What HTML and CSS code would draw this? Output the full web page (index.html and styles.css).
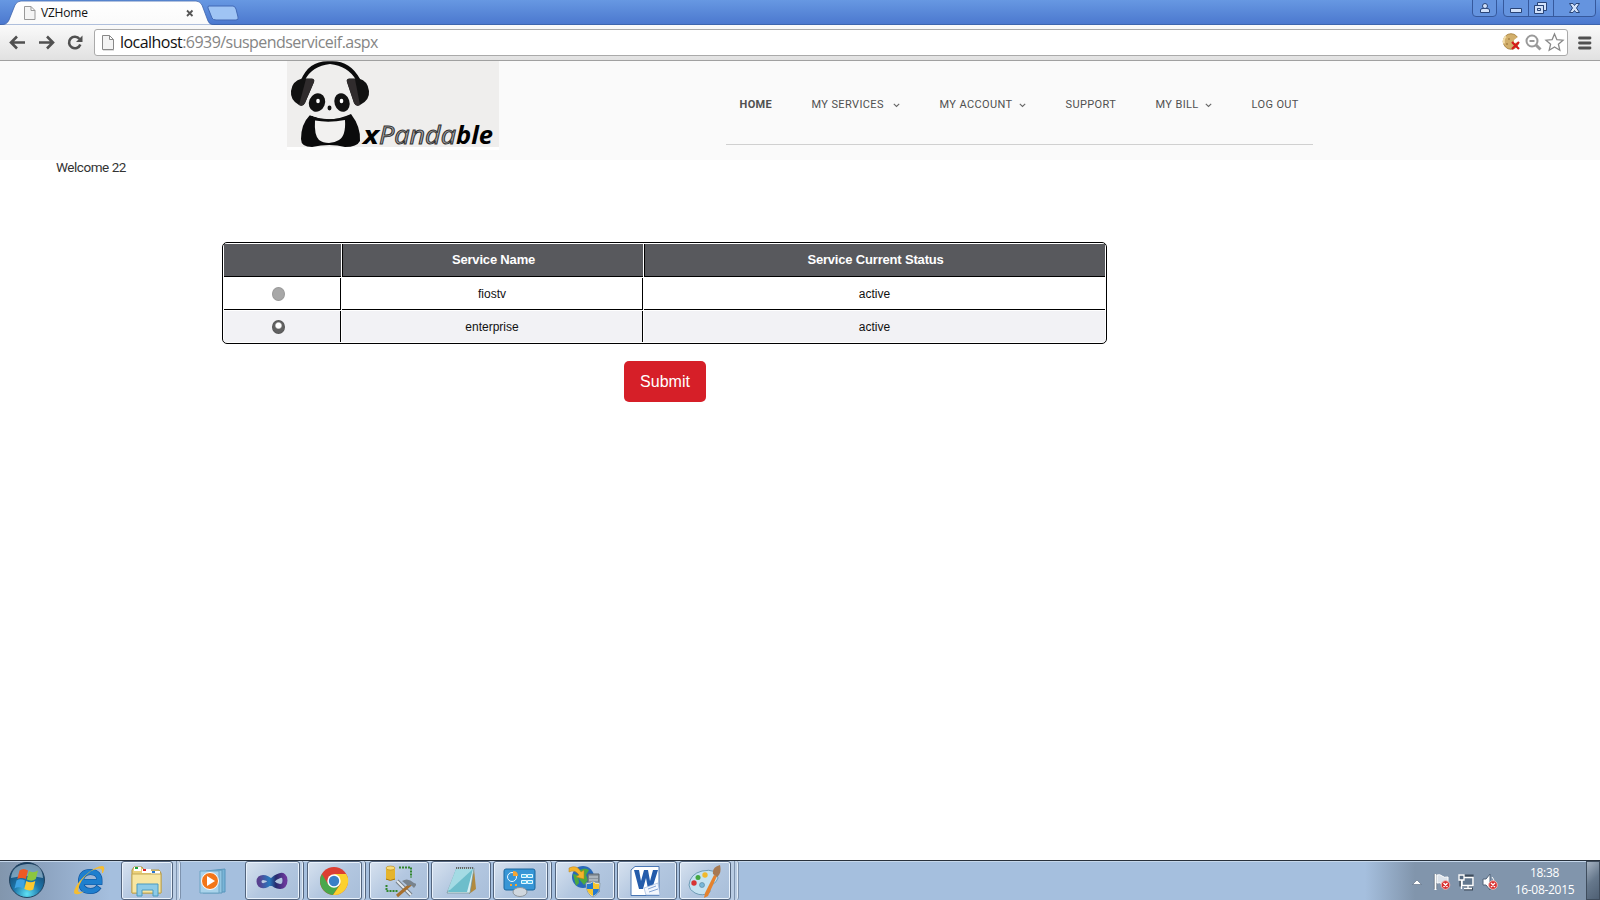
FILE: index.html
```html
<!DOCTYPE html>
<html lang="en">
<head>
<meta charset="utf-8">
<title>VZHome</title>
<link rel="stylesheet" href="styles.css">
</head>
<body>
<div class="screen">
  <div class="titlebar">
    <svg class="tabs" width="250" height="25" viewBox="0 0 250 25">
      <defs><linearGradient id="tabfill" x1="0" y1="0" x2="0" y2="1"><stop offset="0" stop-color="#fff"/><stop offset="1" stop-color="#fafafa"/></linearGradient></defs>
      <path d="M0 25Q7 25 9 20L15 5Q17 1 21 1H196Q200 1 202 5L208 21Q209 24.5 214 25Z" fill="url(#tabfill)" stroke="#3d65ad" stroke-width=".8"/>
      <path d="M209 6H233Q235 6 236 9L238 17Q239 20 236 20H216Q213 20 212 18L208 8Q207.500 6 209 6Z" fill="#9fc4f4" stroke="#4269b5"/>
      <path d="M24.500 6.500h6.500l4 4v9h-10.500zM31 6.500v4h4" fill="#f5f5f5" stroke="#999"/>
      <path d="M187 10.500l5.500 5.500M192.500 10.500l-5.500 5.500" stroke="#555" stroke-width="1.800"/>
    </svg>
    <span class="tab-title">VZHome</span>
    <svg class="winbtns" width="128" height="18" viewBox="1472 0 128 18">
      <g fill="#6594df" stroke="#36599d"><path d="M1472.500 -2V13Q1472.500 16.500 1476 16.500H1493Q1496.500 16.500 1496.500 13V-2"/><path d="M1503.500 -2V13Q1503.500 16.500 1507 16.500H1592Q1595.500 16.500 1595.500 13V-2M1528.500 -1V16M1553.500 -1V16"/></g>
      <g fill="#d1e1fa" stroke="#294477" stroke-width="1">
        <path d="M1480.500 12.500v-2.500q0-1.500 2.500-1.500h4q2.500 0 2.500 1.500v2.500z"/><circle cx="1485" cy="6" r="2.500"/>
        <path d="M1510.500 8.500h11v4h-11z"/>
        <path fill-rule="evenodd" d="M1537.500 2.500h9v8h-9zm3 3h3v2h-3z"/>
        <path fill-rule="evenodd" d="M1534.500 5.500h9v8h-9zm3 3h3v2h-3z"/>
        <path d="M1569.500 3.500h3.500l1.500 2 1.500-2h3.500l-3 4.500 3 4.500h-3.500l-1.500-2-1.500 2h-3.500l3-4.500z"/>
      </g>
    </svg>
  </div>
  <div class="toolbar">
    <svg class="navicons" width="94" height="36" viewBox="0 25 94 36" fill="none" stroke="#505050" stroke-width="2.600">
      <path d="M25 42.500H12M17 36.500l-6 6 6 6M39 42.500H52M47 36.500l6 6-6 6"/><path d="M79.500 39a5.800 5.800 0 1 0 .8 5.500"/><path d="M82.500 35.500v6.500h-6.500z" fill="#505050" stroke="none"/>
    </svg>
    <div class="omnibox">
      <svg width="14" height="18" viewBox="0 0 14 18"><path d="M1.500 2.500h7l4 4v10h-11zM8.500 2.500v4h4" fill="#f3f3f3" stroke="#888"/><path d="M2 17.500h11" stroke="#ddd"/></svg>
      <span class="url"><b>localhost</b>:6939/suspendserviceif.aspx</span>
      <svg class="omni-icons" width="66" height="24" viewBox="1500 31 66 24">
        <circle cx="1510" cy="42.500" r="7.800" fill="#d2af6b" stroke="#a27b37" stroke-width=".8"/><path d="M1513 41l5-4 1 6-6 1z" fill="#fff"/><path d="M1505 37.500q-3 2-2 7" stroke="#f3dea9" stroke-width="2" fill="none"/><circle cx="1508" cy="40" r=".8" fill="#8c6429"/><circle cx="1506" cy="45" r=".8" fill="#8c6429"/>
        <path d="M1511 43l7 7M1518 43l-7 7" stroke="#d51b1b" stroke-width="2.200"/>
        <g fill="none" stroke="#999" stroke-width="2"><circle cx="1531" cy="42" r="5.500"/><path d="M1535 46l4.500 4.500" stroke-width="3"/><path d="M1528.500 42h5"/></g>
        <path d="M1553.500 35l2.400 5.700 6.100.5-4.600 4 1.400 6-5.300-3.200-5.300 3.200 1.400-6-4.600-4 6.100-.5z" fill="#fff" stroke="#888" stroke-width="1.300"/>
      </svg>
    </div>
    <svg class="menu" width="14" height="14" viewBox="0 0 14 14"><path d="M1.500 2h10.500M1.500 7h10.500M1.500 12h10.500" stroke="#505050" stroke-width="2.800" stroke-linecap="round"/></svg>
  </div>

  <header class="site-header">
    <svg class="logo" width="212" height="89" viewBox="287 61 212 89">
      <path fill="#efeeed" d="M287 61h212v86H287z"/><path fill="#fff" d="M287 147h212v3H287z"/>
      <path d="M301 80Q309 60 330 61.200Q350 60 360 79L356 80Q348 66 330 64Q312 66 305 80Z" fill="#0b0b0c"/>
      <path d="M302 78.500L312 78.500Q315 79 314 82L305 103Q303 107 299 105Q290 100 291 91Q292 81 302 78.500Z" fill="#111"/>
      <path d="M306 79h6q3 0 2 3l-9 21q-2 4-6 2z" fill="#302c2d"/>
      <path d="M359 78.500L349 78.500Q346 79 347 82L354 103Q356 107 360 105Q370 100 369 91Q368 81 359 78.500Z" fill="#111"/>
      <path d="M355 79h-6q-3 0-2 3l7 21q2 4 6 2z" fill="#302c2d"/>
      <path d="M310 115Q329 124 351 114Q361 127 360 141Q357 147 345 147Q330 143 312 147Q301 147 301 139Q301 124 310 115Z" fill="#0b0b0c"/>
      <path d="M315 120.500Q329 123 345 120Q346 136 339 140Q334 143 329 143Q323 143 319 140Q314 135 315 120.500Z" fill="#f2f1f0"/><path d="M309 115Q330 123 352 113L350 110H311Z" fill="#efeeed"/><path d="M311 117Q330 122.500 349 117" stroke="#111" fill="none"/>
      <ellipse cx="317" cy="102.500" rx="8" ry="9.500" transform="rotate(22 317 102.500)" fill="#111"/><ellipse cx="342" cy="102.500" rx="7.500" ry="9.500" transform="rotate(-18 342 102.500)" fill="#111"/>
      <ellipse cx="318" cy="101" rx="1.800" ry="2.200" fill="#fff"/><ellipse cx="341.500" cy="101" rx="1.800" ry="2.200" fill="#fff"/>
      <ellipse cx="329.500" cy="108" rx="2" ry="2.400" fill="#111"/>
      <g class="logo-text"><text x="363" y="144" textLength="16" lengthAdjust="spacingAndGlyphs" class="lt-black">x</text><text x="379" y="144" textLength="77" lengthAdjust="spacingAndGlyphs" class="lt-outline">Panda</text><text x="456" y="144" textLength="37" lengthAdjust="spacingAndGlyphs" class="lt-black">ble</text></g>
    </svg>
    <nav class="nav">
      <a class="home">HOME</a>
      <a class="services">MY SERVICES<svg width="7" height="5" viewBox="0 0 7 5"><path d="M.8.800l2.700 2.700 2.700-2.700"/></svg></a>
      <a class="account">MY ACCOUNT<svg width="7" height="5" viewBox="0 0 7 5"><path d="M.8.800l2.700 2.700 2.700-2.700"/></svg></a>
      <a class="support">SUPPORT</a>
      <a class="bill">MY BILL<svg width="7" height="5" viewBox="0 0 7 5"><path d="M.8.800l2.700 2.700 2.700-2.700"/></svg></a>
      <a class="logout">LOG OUT</a>
    </nav>
  </header>

  <main class="page">
    <p class="welcome">Welcome 22</p>
    <div class="services-table">
      <div class="row head"><div></div><div>Service Name</div><div>Service Current Status</div></div>
      <div class="row"><div><i class="radio"></i></div><div>fiostv</div><div>active</div></div>
      <div class="row alt"><div><i class="radio on"></i></div><div>enterprise</div><div>active</div></div>
    </div>
    <button class="submit">Submit</button>
  </main>

  <footer class="taskbar">
    <div class="task start"><svg width="40" height="39" viewBox="0 0 40 39">
      <defs><radialGradient id="orb" cx=".5" cy=".9" r=".85"><stop offset="0" stop-color="#5fe1f4"/><stop offset=".45" stop-color="#1c76ab"/><stop offset="1" stop-color="#173e63"/></radialGradient></defs>
      <circle cx="20" cy="19" r="17.500" fill="url(#orb)" stroke="#23435f"/><path d="M4 17Q5 4 20 3T36 17Q20 13 4 17Z" fill="#c3dbe9" opacity=".55"/>
      <path d="M12.500 9.500q4-3 8.500 0l-2.200 8.500q-4.500-2-8.500 0z" fill="#ee5a24"/><path d="M22 10q4 2.500 9-.5l-2.200 8.500q-4 3-9 .5z" fill="#8cc63f"/><path d="M9.500 19.500q4-2.500 8.500 0l-2 8q-4.500-2.500-8.500 0z" fill="#3ea3e3"/><path d="M19.300 20q4 2.500 9 0l-2 8.500q-4 2-9-.5z" fill="#fdc92f"/></svg></div>
    <div class="task ie"><svg width="38" height="38" viewBox="0 0 38 38"><path d="M13 20H29.500Q30 10 20.500 10T11 19.500 20.500 29Q26 29 29 24.500" fill="none" stroke="#0d529c" stroke-width="6"/><path d="M13 20H29.500Q30 10 20.500 10T11 19.500 20.500 29Q26 29 28.500 25" fill="none" stroke="#1f7fce" stroke-width="4.800"/><path d="M33 11q4-9-4-6.500Q19 8 9 20-1 34 9 32q3-1 5-3-6 3-6-1Q10 17 21 9q12-6 11 2z" fill="#f5bd31"/></svg></div>
    <div class="task btn explorer"><svg width="36" height="34" viewBox="0 0 36 34"><path d="M3 6l2-3h8l2 3h15l2 3v20H3z" fill="#ecd27c" stroke="#b29542"/><path d="M5 3h7v4H5zM13 5h9v4h-9zM22 7h9v4h-9z" fill="#fff"/><path d="M6 3h3v2H6z" fill="#1ca23b"/><path d="M14 5h3v2h-3z" fill="#d22"/><path d="M23 7h3v2h-3z" fill="#2878d0"/><path d="M3 10h29v19H3z" fill="#f7e6a2" stroke="#c4a955"/><path d="M8 32V20h21v12h-5v-6H13v6z" fill="#8dcbe7" stroke="#4a9abf"/></svg></div>
    <i class="stack s2"></i>
    <div class="task media"><svg width="30" height="32" viewBox="0 0 30 32"><path d="M8 6l19-2v23H8z" fill="#79b4d7" stroke="#5796bd"/><path d="M5 7l19-2v23H5z" fill="#93c6e2" stroke="#6099bb"/><path d="M2 6h19v22H2z" fill="#a9d3eb" stroke="#6ca4c4"/><circle cx="12" cy="16" r="8.500" fill="#f27618" stroke="#fff"/><path d="M9 11v10l8-5z" fill="#fff"/></svg></div>
    <div class="task btn vs"><svg width="34" height="28" viewBox="0 0 34 28"><defs><linearGradient id="inf"><stop offset="0" stop-color="#58408f"/><stop offset=".4" stop-color="#2878be"/><stop offset=".65" stop-color="#252b6d"/><stop offset="1" stop-color="#6a379a"/></linearGradient></defs><path d="M16 14.500C11 9 4 9 4 14.500s7 5.500 12 0S30 4.500 30 13.500 21 20 16 14.500" fill="none" stroke="url(#inf)" stroke-width="5"/></svg></div>
    <i class="stack"></i>
    <div class="task btn chrome"><svg width="30" height="30" viewBox="0 0 30 30"><circle cx="15" cy="15" r="14" fill="#dc3e32"/><path d="M2.900 8A14 14 0 0 0 14 29L21 18 15 15 9 18z" fill="#49a84b"/><path d="M15 8h12.200A14 14 0 0 1 14 29l7.500-11z" fill="#fbd12f"/><circle cx="15" cy="15" r="6.700" fill="#fff"/><circle cx="15" cy="15" r="5.200" fill="#397fc7"/></svg></div>
    <i class="stack"></i>
    <div class="task btn tools"><svg width="34" height="34" viewBox="0 0 34 34"><path d="M4 4h9v12H4z" fill="#e5b42c"/><ellipse cx="8.500" cy="4" rx="4.500" ry="2" fill="#f8dd77" stroke="#b08219" stroke-width=".6"/><path d="M4 15q4 3 9 0" stroke="#a77817" fill="none"/><path d="M17 3.500h12v10M4.500 21v6h11" fill="none" stroke="#31862d" stroke-width="2" stroke-dasharray="2 1"/><path d="M15 17l14 14" stroke="#777f88" stroke-width="4"/><path d="M15 17l14 14" stroke="#e7ebee" stroke-width="2"/><path d="M29 20L15 32" stroke="#a66f2d" stroke-width="3"/><path d="M20 17q6-4 12 2l3 1-3 4-3-3-3 1z" fill="#78838d"/></svg></div>
    <div class="task btn note"><svg width="34" height="32" viewBox="0 0 34 32"><path d="M30 4l2 20-7 5z" fill="#b28a3d"/><path d="M13 3h17l-4 25H3z" fill="#d6eef2" stroke="#708f95" stroke-width=".7"/><path d="M12 4h17L23 27H4z" fill="#6dbecb"/><path d="M12 4h17L6 25H4z" fill="#a4dbe4"/><path d="M12 3h18" stroke="#666" stroke-width="2" stroke-dasharray="1 1"/></svg></div>
    <div class="task btn panel"><svg width="34" height="32" viewBox="0 0 34 32"><rect x="1" y="4" width="31" height="21" rx="2" fill="#3796d6" stroke="#1b669e"/><circle cx="9" cy="12" r="4.500" fill="none" stroke="#eef9ff"/><path d="M10 11V6q5 0 5 5z" fill="#f7a531"/><path d="M18.500 9.500h5v3h-5zm6 0h5v3h-5zm-6 6h5v3h-5zm6 0h5v3h-5z" fill="#4dbbe9" stroke="#e3f8ff"/><path d="M7 20h2M12 20h2" stroke="#f7a531" stroke-width="2"/><ellipse cx="17" cy="27" rx="7" ry="4.500" fill="#d0d7de" stroke="#8c959d"/></svg></div>
    <i class="stack"></i>
    <div class="task btn shield"><svg width="34" height="34" viewBox="0 0 34 34"><circle cx="15" cy="13" r="11" fill="#2869ba"/><path d="M12 6q5-3 9 0l-3 5 2 5-4 5-5-6zM5 10l5 1 1 8-3 3z" fill="#4ca840"/><path d="M1 4q8-4 12 4l3-2v9l-8-2 3-2Q7 5 1 8z" fill="#f5b42a" stroke="#bb7d10" stroke-width=".5"/><path d="M20 10h11v18H20z" fill="#8b959e" stroke="#5d666e"/><path d="M21 13h9M21 16h9" stroke="#ccd4da"/><path d="M18 19q5 0 7-2 2 2 7 2 0 11-7 14-7-3-7-14z" fill="#fff" stroke="#8c9da7"/><path d="M19 20q4 0 6-2v7h-6zM25 25h6q-1 5-6 7z" fill="#2479ce"/><path d="M31 20q-4 0-6-2v7h6zM25 25h-6q1 5 6 7z" fill="#f7c52e"/></svg></div>
    <div class="task btn word"><svg width="32" height="32" viewBox="0 0 32 32"><path d="M5 1.500h24v29H1V5z" fill="#fff" stroke="#4976b4"/><path d="M4 5h5l2 11 3-11h4l2 11 3-11h5l-6 19h-4l-2-11-3 11H9z" fill="#245cab"/><path d="M14 23l14-5 2 12H16z" fill="#f2f6fd" stroke="#9fb7dc" stroke-width=".7"/><path d="M18 24l8-3M19 27l9-3" stroke="#82a2d3"/></svg></div>
    <div class="task btn paint"><svg width="34" height="34" viewBox="0 0 34 34"><path d="M2 21Q3 10 15 7q15-3 16 7-1 4-6 7-3 3-2 7-7 5-15 1-6-3-6-8z" fill="#c5e2f1" stroke="#6e9bb5"/><circle cx="7" cy="19" r="2.700" fill="#d73333"/><circle cx="11" cy="13.500" r="2.500" fill="#45a740"/><circle cx="18" cy="11" r="2.700" fill="#f1b92d"/><circle cx="15" cy="21" r="2.500" fill="#78b7d8" stroke="#557f97" stroke-width=".6"/><path d="M27 11l3 1-9 20-4 2 1-5z" fill="#e4822e"/><path d="M26 10Q25 3 33 1q2 8-3 12z" fill="#a77951"/></svg></div>
    <i class="stack s2"></i>
    <div class="tray">
      <svg width="92" height="38" viewBox="1410 861 92 38">
        <path d="M1412.500 883.500l4.500-4.500 4.500 4.500z" fill="#fff" stroke="#55677d" stroke-width=".6"/>
        <g fill="none" stroke="#3e4c5c" stroke-width="3.200"><path d="M1435.500 873v15"/><path d="M1461 875h11v9h-11zM1464 888h9"/></g>
        <path d="M1435.500 873v16" stroke="#fff" stroke-width="2"/><path d="M1437 874q3-1 5 1t6 1v8q-4 1-6-1t-5-1z" fill="#dce3eb" stroke="#fff"/>
        <path d="M1462 876.500h11v8h-11z" fill="#63788f" stroke="#fff" stroke-width="1.500"/><path d="M1464 887.500h8M1468 885v2M1459 874h5v5h-5zM1461.500 879v9" fill="#53677e" stroke="#fff" stroke-width="1.300"/>
        <path d="M1483 878h3l4-5v16l-4-5h-3z" fill="#fff" stroke="#52647a"/><path d="M1492 876q2 2 2 5" fill="none" stroke="#fff"/>
        <g fill="#d92e2e" stroke="#f1b3b0"><circle cx="1445.500" cy="884" r="4.300"/><circle cx="1493" cy="884" r="4.300"/></g><path d="M1443.500 882l4 4m0-4l-4 4M1491 882l4 4m0-4l-4 4" stroke="#fff" stroke-width="1.300"/>
      </svg>
      <div class="clock"><span>18:38</span><span>16-08-2015</span></div>
      <i class="show-desktop"></i>
    </div>
  </footer>
</div>
</body>
</html>
```
FILE: styles.css
```css
* { box-sizing: border-box; }
body { margin: 0; background: #fff; font-family: "Liberation Sans", Arial, sans-serif; }
.screen { width: 1600px; height: 900px; display: flex; flex-direction: column; overflow: hidden; }
svg { display: block; flex: none; }

.titlebar { height: 25px; flex: none; display: flex; align-items: flex-start; background: linear-gradient(#6798e2, #4c79cf 95%, #3d65ad 96%); position: relative; }
.tab-title { position: absolute; left: 41px; top: 4px; font: 12px/18px "Open Sans", sans-serif; letter-spacing: -.2px; color: #111; }
.winbtns { margin-left: auto; }
.toolbar { height: 36px; flex: none; display: flex; align-items: center; background: linear-gradient(#fafafa, #e1e1e1); border-bottom: 1px solid #a0a0a0; }
.omnibox { width: 1474px; height: 27px; margin-top: -1px; border: 1px solid #aaa; border-radius: 3px; background: #fff; display: flex; align-items: center; padding-left: 6px; }
.url { margin-left: 5px; font: 16px/24px "Open Sans", sans-serif; letter-spacing: -.54px; color: #858585; white-space: nowrap; }
.url b { font-weight: 400; color: #111; }
.omni-icons { margin-left: auto; }
.menu { margin-left: 10px; }

.site-header { height: 99px; flex: none; background: #fafafa; display: flex; padding-left: 287px; }
.logo { overflow: visible; }
.nav { width: 587px; height: 84px; margin-left: 227px; padding: 5px 0 0 13.5px; border-bottom: 1px solid #d0d0d0; display: flex; align-items: center; gap: 40px; font: 11px/16px Roboto, sans-serif; letter-spacing: .38px; color: #505050; }
.nav a { display: flex; align-items: center; justify-content: space-between; white-space: nowrap; }
.nav svg { fill: none; stroke: #666; stroke-width: 1.1; }
.home { width: 32px; font-weight: 700; }
.services { width: 88px; }
.account { width: 86px; }
.support { width: 50px; }
.bill { width: 56px; }
.logout { width: 47px; }
.logo-text { font: italic 700 25px "Open Sans", sans-serif; }
.lt-black { fill: #000; }
.lt-outline { fill: #aaa; stroke: #333; stroke-width: 1; font-weight: 400; }

.page { flex: 1; }
.welcome { margin: 0 0 0 56px; height: 82px; font: 13.5px/15px Roboto, sans-serif; letter-spacing: -.45px; color: #333; }
.services-table { margin-left: 222px; width: 885px; height: 102px; border: 1px solid #000; border-radius: 5px; padding: 1px; display: flex; flex-direction: column; gap: 1px; font-size: 12px; color: #111; overflow: hidden; }
.row { display: grid; grid-template-columns: 117px 301px 1fr; gap: 1px; height: 32px; flex: none; }
.row > div { display: flex; align-items: center; justify-content: center; padding-top: 1px; border-bottom: 1px solid #000; border-right: 1px solid #000; }
.row > div:last-child { border-right: 0; }
.head { height: 33px; color: #fff; font-weight: 700; font-size: 13px; letter-spacing: -.18px; }
.row.head > div { padding: 0 0 2px 1px; background: #58595d; border-right: 0; border-left: 1px solid #000; }
.row.head > div:first-child { border-left: 0; }
.row.alt { height: 31px; }
.row.alt > div { background: #f2f2f5; border-bottom: 0; }
.radio { width: 13px; height: 14px; border-radius: 50%; background: #a7a7a7; border: 1px solid #999; margin-right: 7px; }
.radio.on { border-color: #555; background: radial-gradient(circle at 50% 38%, #fff 0 2.5px, #626262 3.8px); }
.submit { display: flex; align-items: center; justify-content: center; margin: 17px 0 0 624px; width: 82px; height: 41px; padding: 0; border: 0; border-radius: 5px; background: #d61f28; color: #fff; font: 16px "Liberation Sans", Arial, sans-serif; }

.taskbar { height: 40px; flex: none; display: flex; border-top: 1px solid #28313c; background: linear-gradient(90deg, #8296ad 0, #8da4c1 45px, #a5bfde 110px, #a5bfde 1365px, #8195ac 1415px); box-shadow: inset 0 1px #c5d7eb; }
.task { height: 39px; display: flex; align-items: center; justify-content: center; flex: none; }
.btn { border: 1px solid #53657e; border-radius: 3px; box-shadow: inset 0 0 0 1px #e9f2fc; background: linear-gradient(135deg, #d7e2ef, #b3c7e0 50%, #a8bed9); }
.stack { width: 4px; height: 39px; margin-right: 3px; border-right: 1px solid #53657e; border-radius: 0 3px 3px 0; background: #b9cce3; box-shadow: inset -1px 0 #e2ecf7; }
.s2 { width: 8px; background: linear-gradient(90deg, #b9cce3 3px, #7d92ad 3px 4px, #b9cce3 4px); border-right-color: #7d92ad; }
.start { width: 54px; }
.ie { width: 67px; padding-left: 2px; }
.explorer { width: 52px; }
.media { width: 61px; padding-right: 3px; }
.vs { width: 55px; padding-right: 2px; }
.chrome { width: 55px; padding-right: 2px; }
.tools { width: 60px; }
.note { width: 60px; margin-left: 2px; }
.panel { width: 55px; margin-left: 2px; padding-right: 2px; }
.shield { width: 60px; }
.word { width: 60px; margin-left: 2px; padding-right: 2px; }
.paint { width: 52px; margin-left: 2px; padding-right: 2px; }
.tray { margin-left: auto; display: flex; align-items: center; }
.clock { width: 84px; display: flex; flex-direction: column; align-items: center; font: 12px/17px "Open Sans", sans-serif; letter-spacing: -.3px; color: #fff; padding-left: 1px; white-space: nowrap; }
.show-desktop { width: 14px; height: 39px; border: 1px solid #3f4d5d; background: linear-gradient(135deg, #a6b3c2, #66788c 50%, #4f6074); }
```
